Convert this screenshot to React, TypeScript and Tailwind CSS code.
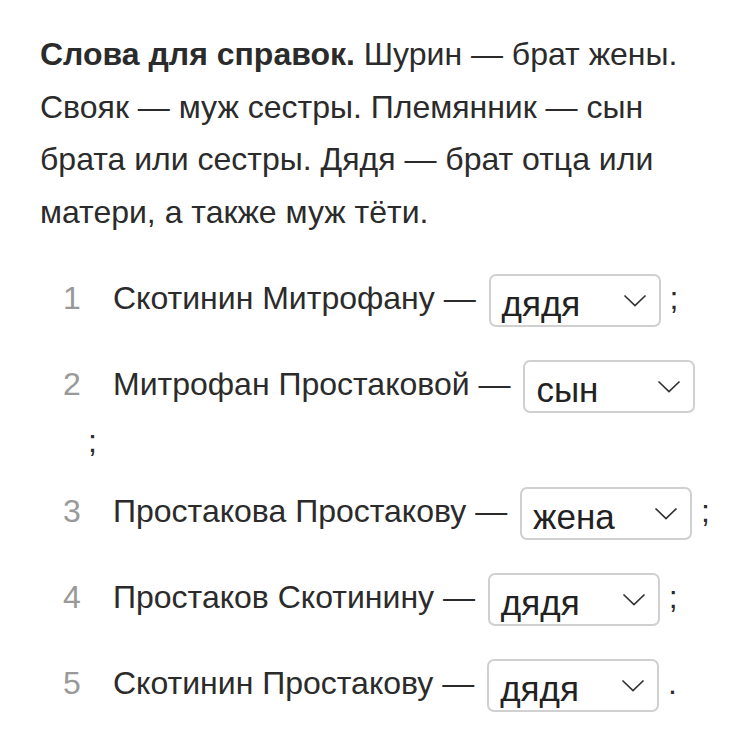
const items = [
  { n: 1, text: "Скотинин Митрофану —", value: "дядя", end: ";" },
  { n: 2, text: "Митрофан Простаковой —", value: "сын", end: ";" },
  { n: 3, text: "Простакова Простакову —", value: "жена", end: ";" },
  { n: 4, text: "Простаков Скотинину —", value: "дядя", end: ";" },
  { n: 5, text: "Скотинин Простакову —", value: "дядя", end: "." },
];

function Select({ value }: { value: string }) {
  return (
    <span className="my-[8px] ml-[4px] inline-flex h-[53px] w-[172px] items-center justify-between rounded-[7px] border-2 border-[#d0d0d0] pl-[11px] pr-[12px] align-middle indent-0 text-[35px] leading-none text-[#222]">
      <span className="pt-[5px]">{value}</span>
      <svg width="24" height="13" viewBox="0 0 24 13" fill="none" stroke="#333" strokeWidth="1.7">
        <path d="M1.5 1.5l10.5 10 10.5-10" />
      </svg>
    </span>
  );
}

export default function App() {
  return (
    <div className="h-[750px] w-[750px] bg-white pt-[28px] pl-[40px] text-[#2b2b2b] font-['Liberation_Sans',Arial,sans-serif]">
      <div className="w-[670px]">
        <p className="text-[32px] leading-[52.5px]">
          <b className="font-bold">Слова для справок.</b> Шурин — брат жены. Свояк — муж сестры. Племянник — сын брата
          или сестры. Дядя — брат отца или матери, а также муж тёти.
        </p>
        <ol className="mt-[28px] flex flex-col gap-[17px] text-[32px] leading-[41px]">
          {items.map((it) => (
            <li key={it.n} className="pl-[48px] indent-[-25px]">
              <span className="inline-block w-[50px] indent-0 text-[#999]">{it.n}</span>
              {it.text} <Select value={it.value} /> {it.end}
            </li>
          ))}
        </ol>
      </div>
    </div>
  );
}
